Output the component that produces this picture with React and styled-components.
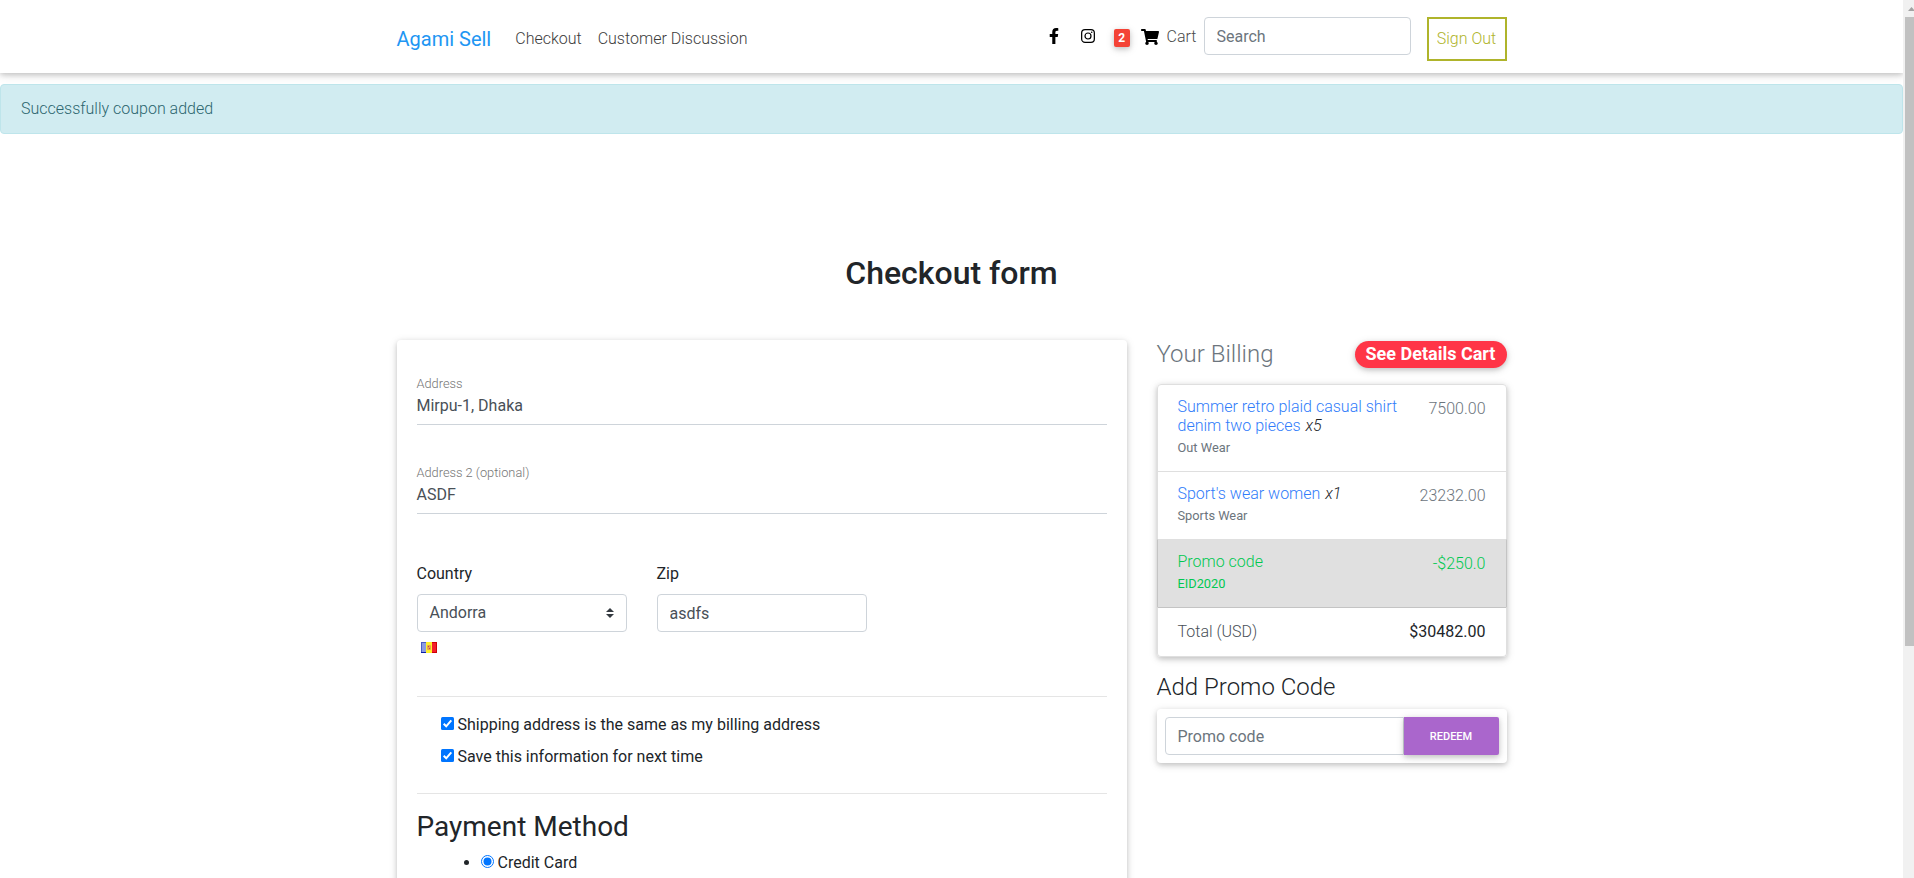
import React from "react";
import styled, { createGlobalStyle } from "styled-components";
import { FaFacebookF, FaShoppingCart } from "react-icons/fa";

const GlobalStyle = createGlobalStyle`
  *, *::before, *::after { box-sizing: border-box; }
  body {
    margin: 0;
    overflow: hidden;
    background: #fff;
    color: #212529;
    font-family: Roboto, "Liberation Sans", sans-serif;
    font-size: 16px;
    font-weight: 300;
    line-height: 1.5;
  }
  a { text-decoration: none; color: inherit; }
  input, button { font-family: inherit; margin: 0; }
`;

const raised = "0 2px 5px 0 rgba(0,0,0,.16), 0 2px 10px 0 rgba(0,0,0,.12)";

const Screen = styled.div`
  display: flex;
  height: 878px;
  overflow: hidden;
`;
const Page = styled.div`
  flex: 1;
  min-width: 0;
  overflow: hidden;
`;
const ScrollTrack = styled.div`
  width: 11px;
  background: #f1f1f1;
  padding-left: 2px;
  overflow: hidden;
`;
const ScrollArrow = styled.svg`
  display: block;
  width: 13px;
  height: 17px;
`;
const ScrollThumb = styled.div`
  width: 13px;
  height: 629px;
  background: #c1c1c1;
`;

const Container = styled.div`
  width: 1110px;
  margin: 0 auto;
`;
const Navbar = styled.nav`
  height: 73px;
  box-shadow: ${raised};
`;
const NavRow = styled(Container)`
  display: flex;
  align-items: flex-start;
  padding-top: 17px;
`;
const Brand = styled.a`
  margin: 7px 16px 0 0;
  font-size: 20px;
  line-height: 30px;
  font-weight: 400;
  color: #2196f3;
`;
const NavLink = styled.a`
  padding: 0 8px;
  margin-top: 10px;
  color: #3c3c3c;
`;
const NavTools = styled.div`
  display: flex;
  align-items: flex-start;
  margin-left: auto;
`;
const IconLink = styled.a`
  display: flex;
  margin: 11px ${(p) => p.$gap}px 0 0;
  color: #000;
`;
const CountBadge = styled.span`
  width: 16px;
  height: 18px;
  margin: 12px 11px 0 0;
  border-radius: 2px;
  background: #f44336;
  box-shadow: ${raised};
  color: #fff;
  font-size: 12px;
  font-weight: 700;
  line-height: 18px;
  text-align: center;
`;
const CartLabel = styled.span`
  margin: 8px 7px 0 0;
  color: #4a4a4a;
`;
const TextInput = styled.input`
  display: block;
  width: ${(p) => p.$width || 210}px;
  height: 38px;
  padding: 6px 12px;
  border: 1px solid #ced4da;
  border-radius: ${(p) => (p.$joined ? "4px 0 0 4px" : "4px")};
  background: #fff;
  color: #495057;
  font-size: 16px;
  font-weight: 400;
  outline: 0;
  &::placeholder { color: #6c757d; opacity: 1; }
`;
const SearchInput = styled(TextInput)`
  margin-right: 16px;
`;
const SignOut = styled.a`
  width: 80px;
  height: 44px;
  border: 2px solid #afb42b;
  color: #afb42b;
  line-height: 39px;
  text-align: center;
`;

const Alert = styled.div`
  height: 50px;
  margin-top: 11px;
  padding: 12px 20px;
  border: 1px solid #bee5eb;
  border-radius: 4px;
  background: #d1ecf1;
  color: #2c666f;
`;
const Title = styled.h2`
  margin: 119.6px 0 48px;
  font-size: 32px;
  font-weight: 500;
  line-height: 38.4px;
  text-align: center;
`;
const Columns = styled(Container)`
  display: flex;
  align-items: flex-start;
  gap: 30px;
`;
const FormCard = styled.section`
  width: 730px;
  height: 620px;
  padding: 33px 20px 0;
  border-radius: 4px;
  background: #fff;
  box-shadow: ${raised};
`;
const LineField = styled.div`
  height: 52px;
  margin-bottom: 37px;
  border-bottom: 1px solid #ced4da;
`;
const LineLabel = styled.label`
  display: block;
  font-size: 12.8px;
  line-height: 22px;
  color: #757575;
`;
const LineValue = styled.div`
  font-weight: 400;
  line-height: 22px;
  color: #495057;
`;
const FieldRow = styled.div`
  display: flex;
  gap: 30px;
  margin-top: 48px;
`;
const Field = styled.div`
  width: 210px;
`;
const FieldLabel = styled.label`
  display: block;
  margin-bottom: 8px;
  font-weight: 400;
`;
const Select = styled.div`
  display: flex;
  align-items: center;
  justify-content: space-between;
  height: 38px;
  padding: 0 12px;
  border: 1px solid #ced4da;
  border-radius: 4px;
  color: #495057;
  font-weight: 400;
`;
const Flag = styled.svg`
  display: block;
  margin: 10px 0 0 4px;
`;
const Divider = styled.hr`
  height: 1px;
  margin: ${(p) => p.$top}px 0 0;
  border: 0;
  background: #e5e5e5;
`;
const Option = styled.label`
  display: flex;
  align-items: center;
  gap: 4px;
  height: 24px;
  margin: ${(p) => p.$top}px 0 0 24px;
  font-weight: 400;
`;
const Tick = styled.svg`
  display: block;
  margin-top: -3px;
`;
const PaymentTitle = styled.h3`
  margin: 16px 0 0;
  font-size: 28px;
  font-weight: 400;
  line-height: 34px;
`;
const Methods = styled.ul`
  margin: 7px 0 0;
  padding-left: 64px;
`;
const Method = styled.li`
  font-weight: 400;
  line-height: 24px;
`;
const MethodLabel = styled.label`
  display: flex;
  align-items: center;
  gap: 4px;
`;

const Side = styled.aside`
  width: 350px;
`;
const SideHead = styled.div`
  display: flex;
  justify-content: space-between;
  height: 44px;
`;
const SideTitle = styled.h4`
  margin: 0;
  font-size: 24px;
  font-weight: 300;
  line-height: 29px;
  color: ${(p) => (p.$muted ? "#6c757d" : "#212529")};
`;
const DetailsBadge = styled.a`
  width: 152px;
  height: 27px;
  margin-top: 1px;
  border-radius: 14px;
  background: #ff3547;
  box-shadow: ${raised};
  color: #fff;
  font-size: 18px;
  font-weight: 700;
  line-height: 26px;
  text-align: center;
`;
const BillList = styled.div`
  border-radius: 4px;
  box-shadow: ${raised};
`;
const BillItem = styled.div`
  display: flex;
  justify-content: space-between;
  height: ${(p) => p.$height}px;
  margin-top: ${(p) => (p.$first ? 0 : -1)}px;
  padding: 12px 20px;
  border: 1px solid ${(p) => (p.$promo ? "#c4c4c4" : "#dfdfdf")};
  border-top-color: ${(p) => (p.$last ? "#c4c4c4" : "#dfdfdf")};
  border-radius: ${(p) => (p.$first ? "4px 4px 0 0" : p.$last ? "0 0 4px 4px" : 0)};
  background: ${(p) => (p.$promo ? "#e0e0e0" : "#fff")};
  color: #495057;
`;
const ItemInfo = styled.div`
  width: 230px;
`;
const ItemName = styled.h6`
  margin: 0 0 1px;
  font-size: 16px;
  font-weight: 300;
  line-height: 19.2px;
  color: ${(p) => (p.$promo ? "#00c851" : "#212529")};
`;
const ItemLink = styled.a`
  margin-right: 1px;
  color: #307cfa;
`;
const Small = styled.small`
  display: block;
  font-size: 12.8px;
  font-weight: 400;
  line-height: 24px;
  color: ${(p) => (p.$promo ? "#00c851" : "#6c757d")};
`;
const Price = styled.span`
  color: ${(p) => (p.$promo ? "#00c851" : "#6c757d")};
`;
const Total = styled.strong`
  font-weight: 400;
  color: #212529;
`;
const PromoTitle = styled(SideTitle)`
  margin: 16px 0 7px;
`;
const PromoCard = styled.div`
  display: flex;
  height: 54px;
  padding: 8px;
  border-radius: 4px;
  box-shadow: ${raised};
`;
const Redeem = styled.button`
  width: 95px;
  height: 38px;
  padding: 0;
  border: 0;
  border-radius: 0 2px 2px 0;
  background: #aa66cc;
  box-shadow: ${raised};
  color: #fff;
  font-size: 11px;
  font-weight: 500;
`;

const InstagramIcon = () => (
  <svg width="14" height="16" viewBox="0 0 14 16" fill="none" stroke="#000">
    <rect x=".65" y="1.65" width="12.7" height="12.7" rx="3.4" strokeWidth="1.25" />
    <circle cx="7" cy="8" r="3" strokeWidth="1.2" />
    <circle cx="10.7" cy="4.3" r=".8" fill="#000" stroke="none" />
  </svg>
);

const CheckMark = () => (
  <Tick width="13" height="13" viewBox="0 0 13 13">
    <rect width="13" height="13" rx="1.5" fill="#0075ff" />
    <path d="M2.7 6.8 5.2 9.3 10.3 3.3" fill="none" stroke="#fff" strokeWidth="2" />
  </Tick>
);

const RadioMark = () => (
  <Tick width="13" height="13" viewBox="0 0 13 13">
    <circle cx="6.5" cy="6.5" r="6" fill="#fff" stroke="#0075ff" />
    <circle cx="6.5" cy="6.5" r="4" fill="#0075ff" />
  </Tick>
);

const AndorraFlag = () => (
  <Flag width="16" height="11" viewBox="0 0 16 11">
    <rect width="5" height="11" fill="#8c9be0" />
    <path d="M0 .5h5M.5 0v11" stroke="#4a5cc4" />
    <path d="M0 10.5h5" stroke="#0a1fa8" />
    <rect x="5" width="6" height="11" fill="#fdf02c" />
    <rect x="11" width="5" height="11" fill="#f3202a" />
    <path d="M11 .5h5M15.5 0v11M11 10.5h5" stroke="#cf0008" />
    <rect x="6" y="3" width="4" height="5" rx="1" fill="#e9a04c" />
    <path d="M7 4.5h1M8 6.5h1" stroke="#c43d4e" />
  </Flag>
);

const items = [
  { name: "Summer retro plaid casual shirt denim two pieces", qty: "x5", kind: "Out Wear", price: "7500.00", height: 88 },
  { name: "Sport's wear women", qty: "x1", kind: "Sports Wear", price: "23232.00", height: 69 },
];

export default function App() {
  return (
    <Screen>
      <GlobalStyle />
      <Page>
        <Navbar>
          <NavRow>
            <Brand href="#">Agami Sell</Brand>
            <NavLink href="#">Checkout</NavLink>
            <NavLink href="#">Customer Discussion</NavLink>
            <NavTools>
              <IconLink href="#" $gap={19}><FaFacebookF size={16} /></IconLink>
              <IconLink href="#" $gap={19}><InstagramIcon /></IconLink>
              <CountBadge>2</CountBadge>
              <IconLink href="#" $gap={8}><FaShoppingCart size={18} height={16} /></IconLink>
              <CartLabel>Cart</CartLabel>
              <SearchInput $width={207} placeholder="Search" />
              <SignOut href="#">Sign Out</SignOut>
            </NavTools>
          </NavRow>
        </Navbar>
        <Alert>Successfully coupon added</Alert>
        <Title>Checkout form</Title>
        <Columns>
          <FormCard>
            <LineField>
              <LineLabel>Address</LineLabel>
              <LineValue>Mirpu-1, Dhaka</LineValue>
            </LineField>
            <LineField>
              <LineLabel>Address 2 (optional)</LineLabel>
              <LineValue>ASDF</LineValue>
            </LineField>
            <FieldRow>
              <Field>
                <FieldLabel>Country</FieldLabel>
                <Select>
                  Andorra
                  <svg width="8" height="10" viewBox="0 0 4 5">
                    <path fill="#343a40" d="M2 0L0 2h4zm0 5L0 3h4z" />
                  </svg>
                </Select>
                <AndorraFlag />
              </Field>
              <Field>
                <FieldLabel>Zip</FieldLabel>
                <TextInput defaultValue="asdfs" />
              </Field>
            </FieldRow>
            <Divider $top={43} />
            <Option $top={16}><CheckMark />Shipping address is the same as my billing address</Option>
            <Option $top={8}><CheckMark />Save this information for next time</Option>
            <Divider $top={24} />
            <PaymentTitle>Payment Method</PaymentTitle>
            <Methods>
              <Method><MethodLabel><RadioMark />Credit Card</MethodLabel></Method>
            </Methods>
          </FormCard>
          <Side>
            <SideHead>
              <SideTitle $muted>Your Billing</SideTitle>
              <DetailsBadge href="#">See Details Cart</DetailsBadge>
            </SideHead>
            <BillList>
              {items.map((item, i) => (
                <BillItem key={item.name} $first={i === 0} $height={item.height}>
                  <ItemInfo>
                    <ItemName><ItemLink href="#">{item.name}</ItemLink> <em>{item.qty}</em></ItemName>
                    <Small>{item.kind}</Small>
                  </ItemInfo>
                  <Price>{item.price}</Price>
                </BillItem>
              ))}
              <BillItem $promo $height={69}>
                <ItemInfo>
                  <ItemName $promo>Promo code</ItemName>
                  <Small $promo>EID2020</Small>
                </ItemInfo>
                <Price $promo>-$250.0</Price>
              </BillItem>
              <BillItem $last $height={50}>
                <span>Total (USD)</span>
                <Total>$30482.00</Total>
              </BillItem>
            </BillList>
            <PromoTitle>Add Promo Code</PromoTitle>
            <PromoCard>
              <TextInput $width={239} $joined placeholder="Promo code" />
              <Redeem>REDEEM</Redeem>
            </PromoCard>
          </Side>
        </Columns>
      </Page>
      <ScrollTrack>
        <ScrollArrow viewBox="0 0 13 17">
          <path d="M3 11h7L6.5 7z" fill="#a3a3a3" />
        </ScrollArrow>
        <ScrollThumb />
      </ScrollTrack>
    </Screen>
  );
}
